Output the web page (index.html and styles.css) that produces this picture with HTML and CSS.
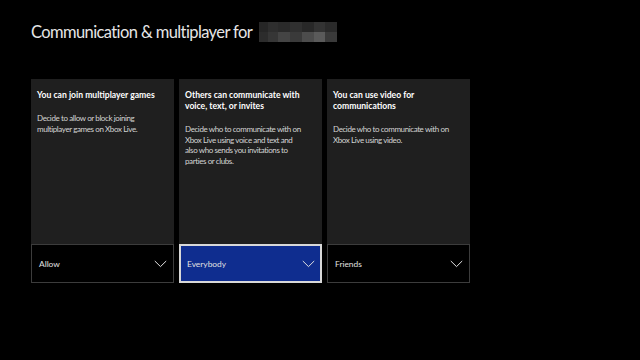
FILE: index.html
```html
<!DOCTYPE html>
<html>
<head>
<meta charset="utf-8">
<link rel="stylesheet" href="styles.css">
</head>
<body>
<div class="screen">
  <h1 class="heading">Communication &amp; multiplayer for <span class="blurred"></span></h1>
  <div class="cards">
    <div class="card">
      <div class="card-body">
        <div class="card-title">You can join multiplayer games</div>
        <div class="card-desc">Decide to allow or block joining multiplayer games on Xbox Live.</div>
      </div>
      <div class="dropdown">
        <span class="dd-label">Allow</span>
        <svg class="chev" width="13" height="8" viewBox="0 0 13 8"><path d="M0.8 1 L6.5 6.6 L12.2 1" fill="none" stroke="currentColor" stroke-width="1"/></svg>
      </div>
    </div>
    <div class="card">
      <div class="card-body">
        <div class="card-title">Others can communicate with voice, text, or invites</div>
        <div class="card-desc">Decide who to communicate with on Xbox Live using voice and text and also who sends you invitations to parties or clubs.</div>
      </div>
      <div class="dropdown selected">
        <span class="dd-label">Everybody</span>
        <svg class="chev" width="13" height="8" viewBox="0 0 13 8"><path d="M0.8 1 L6.5 6.6 L12.2 1" fill="none" stroke="currentColor" stroke-width="1"/></svg>
      </div>
    </div>
    <div class="card">
      <div class="card-body">
        <div class="card-title">You can use video for communications</div>
        <div class="card-desc">Decide who to communicate with on Xbox Live using video.</div>
      </div>
      <div class="dropdown">
        <span class="dd-label">Friends</span>
        <svg class="chev" width="13" height="8" viewBox="0 0 13 8"><path d="M0.8 1 L6.5 6.6 L12.2 1" fill="none" stroke="currentColor" stroke-width="1"/></svg>
      </div>
    </div>
  </div>
</div>
</body>
</html>
```
FILE: styles.css
```css
html, body {
  margin: 0;
  padding: 0;
  background: #000;
}
.screen {
  width: 640px;
  height: 360px;
  background: #000;
  padding: 20px 0 0 31px;
  box-sizing: border-box;
  font-family: Lato, "Noto Sans", sans-serif;
  color: #fff;
}
.heading {
  margin: 0;
  font-weight: 400;
  font-size: 16.5px;
  line-height: 24px;
  color: #e6e6e6;
  display: flex;
  align-items: center;
  letter-spacing: -0.6px;
}
.blurred {
  display: inline-block;
  width: 78px;
  height: 20px;
  margin-left: 7px;
  background:
    linear-gradient(90deg, #262626 0 12%, #2e2e2e 12% 25%, #2a2a2a 25% 40%, #303030 40% 55%, #282828 55% 70%, #333 70% 85%, #2a2a2a 85% 100%) top / 100% 50% no-repeat,
    linear-gradient(90deg, #2c2c2c 0 12%, #363636 12% 25%, #444 25% 40%, #3a3a3a 40% 55%, #4c4c4c 55% 70%, #5a5a5a 70% 85%, #3a3a3a 85% 100%) bottom / 100% 50% no-repeat;
}
.cards {
  display: flex;
  gap: 5px;
  margin-top: 35px;
}
.card {
  width: 143px;
  height: 204px;
  background: #1f1f1f;
  display: flex;
  flex-direction: column;
}
.card-body {
  flex: 1;
  padding: 11px 16px 0 6px;
}
.card-title {
  font-weight: 700;
  font-size: 8.6px;
  line-height: 11px;
  color: #fff;
}
.card-desc {
  margin-top: 12px;
  font-size: 8px;
  line-height: 10.7px;
  color: #d4d4d4;
  letter-spacing: -0.4px;
}
.dropdown {
  height: 39px;
  box-sizing: border-box;
  background: #000;
  border: 1px solid #3c3c3c;
  display: flex;
  align-items: center;
  justify-content: space-between;
  padding: 0 6px 0 7px;
  color: #e0e0e0;
}
.dropdown.selected {
  background: #0f2d8f;
  border: 2px solid #d8d8d8;
  padding: 0 5px 0 6px;
}
.dd-label {
  font-size: 8.4px;
}
.chev {
  display: block;
}
```
